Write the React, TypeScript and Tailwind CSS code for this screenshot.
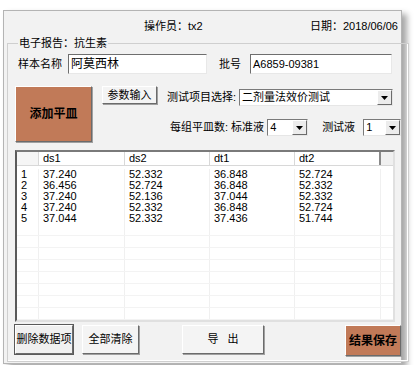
import React from "react";

const rows = [
  ["1", "37.240", "52.332", "36.848", "52.724"],
  ["2", "36.456", "52.724", "36.848", "52.332"],
  ["3", "37.240", "52.136", "37.044", "52.332"],
  ["4", "37.240", "52.332", "36.848", "52.724"],
  ["5", "37.044", "52.332", "37.436", "51.744"],
];

const cols = ["w-[22px]", "w-[86px]", "w-[85px]", "w-[85px]", "w-[86px]", "flex-1"];

function Btn({ children, className = "" }: { children: React.ReactNode; className?: string }) {
  return (
    <button
      className={
        "flex shrink-0 items-center justify-center whitespace-nowrap border border-t-white border-l-white border-r-[#6b6b6b] border-b-[#6b6b6b] shadow-[1px_1px_0_#a0a0a0] text-[11px] text-black " +
        className
      }
    >
      {children}
    </button>
  );
}

function Select({ value, className = "" }: { value: string; className?: string }) {
  return (
    <div
      className={
        "flex h-[17px] shrink-0 items-stretch border border-t-[#7a7a7a] border-l-[#7a7a7a] border-r-[#e6e6e6] border-b-[#e6e6e6] bg-white " +
        className
      }
    >
      <span className="flex-1 truncate pl-[2px] text-[11px] leading-[15px]">{value}</span>
      <span className="flex w-[15px] items-center justify-center border border-t-white border-l-white border-r-[#6b6b6b] border-b-[#6b6b6b] bg-[#ececec]">
        <svg width="7" height="4" viewBox="0 0 7 4">
          <path d="M0 0h7L3.5 4z" fill="#000" />
        </svg>
      </span>
    </div>
  );
}

export default function App() {
  return (
    <div
      className="h-[365px] w-[416px] overflow-hidden bg-white pl-[3px] pt-[10px] text-black"
      style={{ fontFamily: '"Liberation Sans", "Noto Sans CJK SC", sans-serif' }}
    >
      <div className="flex h-[354px] w-[399px] flex-col border border-[#b4b4b4] bg-[#f2f2f2] shadow-[5px_4px_6px_rgba(0,0,0,0.35)]">
        <div className="flex h-[26px] shrink-0 items-end whitespace-nowrap pb-[4px] text-[11px] leading-[13px]">
          <span className="ml-[140px]">操作员：tx2</span>
          <span className="ml-auto mr-[3px]">日期：2018/06/06</span>
        </div>

        <fieldset className="mx-[3px] flex h-[325px] flex-col whitespace-nowrap border border-[#cfcfcf] px-[7px] shadow-[inset_-1px_-1px_0_#fff]">
          <legend className="ml-[3px] px-[1px] text-[11px] leading-[13px]">电子报告：抗生素</legend>

          <div className="mt-[4px] flex shrink-0 items-center text-[11px]">
            <span className="ml-[3px] w-[50px]">样本名称</span>
            <div className="h-[20px] w-[139px] border border-t-[#6e6e6e] border-l-[#6e6e6e] border-r-[#e8e8e8] border-b-[#e8e8e8] bg-white pl-[2px] text-[12px] leading-[18px]">
              阿莫西林
            </div>
            <span className="ml-[12px] w-[31px]">批号</span>
            <div className="h-[20px] w-[142px] border border-t-[#6e6e6e] border-l-[#6e6e6e] border-r-[#e8e8e8] border-b-[#e8e8e8] bg-white pl-[2px] text-[11px] leading-[18px]">
              A6859-09381
            </div>
          </div>

          <div className="mt-[12px] flex shrink-0">
            <Btn className="h-[56px] w-[77px] bg-[#c17a58] text-[12px] font-bold">添加平皿</Btn>
            <div className="ml-[10px] flex flex-1 flex-col">
              <div className="flex items-start">
                <Btn className="h-[18px] w-[55px] bg-[#f4f4f4]">参数输入</Btn>
                <span className="ml-[10px] mt-[4px] text-[11px] leading-[14px]">测试项目选择:</span>
                <Select value="二剂量法效价测试" className="ml-[3px] mt-[3px] w-[154px]" />
              </div>
              <div className="mt-[13px] flex items-center text-[11px]">
                <span className="ml-[68px]">每组平皿数: 标准液</span>
                <Select value="4" className="ml-[3px] w-[41px]" />
                <span className="ml-[14px]">测试液</span>
                <Select value="1" className="ml-[8px] w-[38px]" />
              </div>
            </div>
          </div>

          <div className="mt-[8px] h-[172px] w-[380px] shrink-0 overflow-hidden border-2 border-t-[#7a7a7a] border-l-[#5a5a5a] border-r-[#e0e0e0] border-b-[#e0e0e0] bg-white text-[11px]">
            <div className="flex h-[14px] border-b border-[#d8d8d8] leading-[13px]">
              {["", "ds1", "ds2", "dt1", "dt2", ""].map((h, i) => (
                <div
                  key={i}
                  className={
                    cols[i] +
                    " pl-[4px] " +
                    (i === 0
                      ? "border-r border-[#d8d8d8] bg-[#f5f5f5]"
                      : i === 4
                      ? "border-r-2 border-[#8a8a8a]"
                      : i === 5
                      ? "bg-[#f0f0f0]"
                      : "border-r border-[#d8d8d8]")
                  }
                >
                  {h}
                </div>
              ))}
            </div>
            <div className="h-[3px]" />
            {rows.map((r) => (
              <div key={r[0]} className="flex h-[11px] leading-[11px]">
                {r.map((c, i) => (
                  <div key={i} className={cols[i] + " border-r border-[#f0f0f0] pl-[4px]"}>
                    {c}
                  </div>
                ))}
                <div className="flex-1" />
              </div>
            ))}
            {Array.from({ length: 10 }).map((_, k) => (
              <div key={k} className="flex h-[12px] border-b border-[#f3f3f3]">
                {cols.slice(0, 5).map((c, i) => (
                  <div key={i} className={c + " border-r border-[#f0f0f0]"} />
                ))}
                <div className="flex-1" />
              </div>
            ))}
          </div>

          <div className="mt-[3px] flex shrink-0 items-start text-[11px]">
            <Btn className="h-[29px] w-[58px] bg-[#f0f0f0] outline outline-1 outline-[#5a5a5a]">删除数据项</Btn>
            <Btn className="ml-[9px] h-[29px] w-[57px] bg-[#f4f4f4]">全部清除</Btn>
            <Btn className="ml-[43px] h-[29px] w-[82px] bg-[#f4f4f4]">导&nbsp;&nbsp;&nbsp;出</Btn>
            <Btn className="ml-auto h-[31px] w-[56px] bg-[#c17a58] text-[12px] font-bold">结果保存</Btn>
          </div>
        </fieldset>
      </div>
    </div>
  );
}
